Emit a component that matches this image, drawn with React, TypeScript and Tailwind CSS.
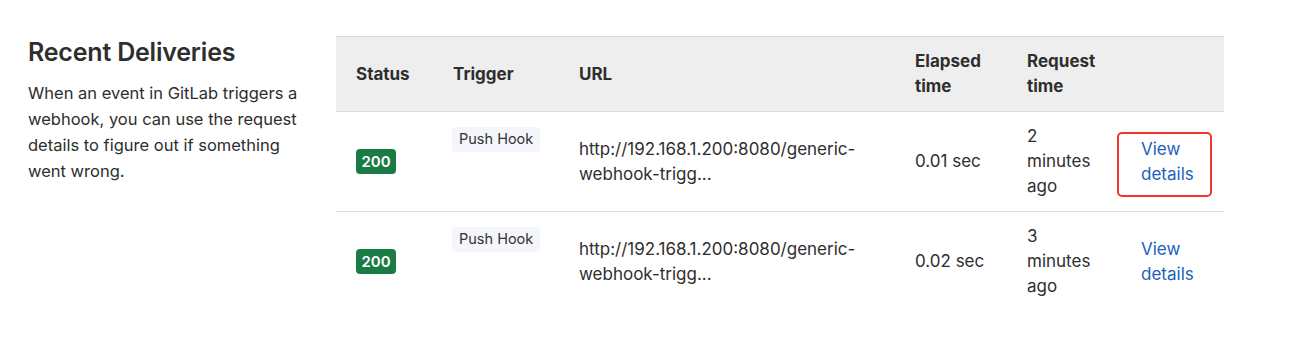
import React from "react";

const rows = [
  { elapsed: "0.01 sec", ago: "2", highlight: true },
  { elapsed: "0.02 sec", ago: "3", highlight: false },
];

export default function App() {
  return (
    <div
      className="w-[1297px] h-[354px] bg-white text-[#2e2e2e] flex items-start pl-[28px] pt-[36px]"
      style={{ fontFamily: "Inter, 'Liberation Sans', Arial, sans-serif" }}
    >
      <div className="w-[308px] shrink-0">
        <h4 className="text-[25px] font-semibold leading-[32px] mt-0 mb-[12px] tracking-[-0.2px]">Recent Deliveries</h4>
        <p className="text-[16.5px] leading-[26px] w-[286px]">
          When an event in GitLab triggers a webhook, you can use the request details to figure out if something went wrong.
        </p>
      </div>
      <table className="w-[888px] border-collapse text-[17px] leading-[25px] table-fixed">
        <colgroup>
          <col className="w-[97px]" />
          <col className="w-[126px]" />
          <col className="w-[336px]" />
          <col className="w-[112px]" />
          <col className="w-[114px]" />
          <col className="w-[103px]" />
        </colgroup>
        <thead>
          <tr className="bg-[#eeeeee] border-t border-b border-[#dddddd]">
            <th className="text-left font-bold px-[20px] py-[12px] align-middle">Status</th>
            <th className="text-left font-bold px-[20px] py-[12px] align-middle">Trigger</th>
            <th className="text-left font-bold px-[20px] py-[12px] align-middle">URL</th>
            <th className="text-left font-bold px-[20px] py-[12px] align-middle">
              Elapsed
              <br />
              time
            </th>
            <th className="text-left font-bold px-[20px] py-[12px] align-middle">
              Request
              <br />
              time
            </th>
            <th className="px-[20px] py-[12px]"></th>
          </tr>
        </thead>
        <tbody>
          {rows.map((r, i) => (
            <tr key={i} className={i === 0 ? "border-b border-[#dddddd]" : ""}>
              <td className="px-[20px] py-[12px] align-middle">
                <span className="flex items-center justify-center w-[40px] h-[25px] rounded-[4px] bg-[#1b7b45] text-white text-[15px] font-semibold leading-none">
                  200
                </span>
              </td>
              <td className="pl-[19px] pr-[10px] pt-[14px] pb-[12px] align-top">
                <span className="inline-flex items-center h-[25px] px-[7px] rounded-[4px] bg-[#f4f6fb] text-[14.5px] leading-none text-[#333333]">
                  Push Hook
                </span>
              </td>
              <td className="px-[20px] py-[12px] align-middle">
                <span className="block whitespace-nowrap">http://192.168.1.200:8080/generic-</span>
                <span className="block">webhook-trigg...</span>
              </td>
              <td className="px-[20px] py-[12px] align-middle">{r.elapsed}</td>
              <td className="px-[20px] py-[12px] align-middle">
                <span className="block">{r.ago}</span>
                <span className="block">minutes</span>
                <span className="block">ago</span>
              </td>
              <td className="px-[20px] py-[12px] align-middle relative">
                <a href="#" className="text-[#1b5fbd] no-underline">
                  <span className="block">View</span>
                  <span className="block">details</span>
                </a>
                {r.highlight && (
                  <div className="absolute left-[-4px] top-[20px] w-[95px] h-[65px] border-2 border-[#f4342b] rounded-[5px] pointer-events-none" />
                )}
              </td>
            </tr>
          ))}
        </tbody>
      </table>
    </div>
  );
}
